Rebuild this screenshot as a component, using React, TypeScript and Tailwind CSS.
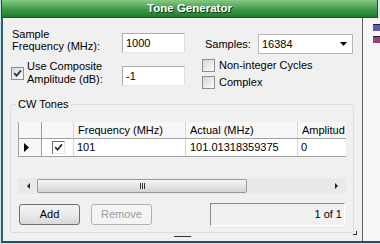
import React from 'react';

function Check({ checked, sunken }: { checked?: boolean; sunken?: boolean }) {
  return (
    <span
      className={`w-[13px] h-[13px] shrink-0 flex items-center justify-center ${
        sunken
          ? 'border border-t-[#6d6d6d] border-l-[#6d6d6d] border-r-[#e4e4e4] border-b-[#e4e4e4] bg-white'
          : 'border border-[#8f8f8f] bg-[linear-gradient(135deg,#d6d6d6,#fdfdfd)]'
      }`}
    >
      {checked && (
        <svg width="9" height="9" viewBox="0 0 9 9">
          <path d="M1.2 4.2 L3.6 6.8 L8 1.4" stroke="#1f2b47" strokeWidth="1.7" fill="none" />
        </svg>
      )}
    </span>
  );
}

function TextBox({ value }: { value: string }) {
  return (
    <div className="w-[63px] h-[20px] shrink-0 border border-[#abadb3] border-b-[#e3e9ef] border-r-[#dbdfe6] bg-white pl-[3px] flex items-center">
      {value}
    </div>
  );
}

export default function App() {
  return (
    <div className="w-[380px] h-[244px] overflow-hidden bg-[#cbe4ec] text-[11px] text-black font-['Liberation_Sans',Arial,sans-serif] flex flex-col">
      {/* title row */}
      <div className="flex h-[18px] shrink-0">
        <div className="w-[377px] ml-px border-b border-r border-l border-[#1f4f27] bg-[linear-gradient(#86c986,#3f9a48_55%,#1f7a2c)] flex items-center justify-center">
          <span className="text-white font-bold text-[11.5px] [text-shadow:1px_1px_0_#0e3b12]">Tone Generator</span>
        </div>
        <div className="flex-1 bg-[#e4e8ea]" />
      </div>

      <div className="flex h-[223px] shrink-0">
        {/* main panel */}
        <div className="relative w-[362px] ml-px border-l-2 border-[#36606c] border-r border-r-[#5f5f5f] bg-[#f0f0f0] flex flex-col">
          {/* top section */}
          <div className="flex h-[71px] shrink-0">
            <div className="w-[182px] flex flex-col">
              <div className="flex mt-[10px] ml-[9px]">
                <div className="w-[110px] leading-[12px]">
                  Sample
                  <br />
                  Frequency (MHz):
                </div>
                <div className="mt-[5px]">
                  <TextBox value="1000" />
                </div>
              </div>
              <div className="flex mt-[7px] ml-[8px]">
                <div className="mt-[7px]">
                  <Check checked />
                </div>
                <div className="w-[95px] ml-[3px] leading-[13px]">
                  Use Composite
                  <br />
                  Amplitude (dB):
                </div>
                <div className="mt-[6px]">
                  <TextBox value="-1" />
                </div>
              </div>
            </div>
            <div className="ml-[17px] flex flex-col">
              <div className="flex items-center mt-[16px]">
                <span className="w-[53px] ml-[3px]">Samples:</span>
                <div className="w-[95px] h-[20px] border border-[#b9b9b9] bg-white flex items-center justify-between pl-[3px] pr-[5px]">
                  <span>16384</span>
                  <svg width="7" height="4" viewBox="0 0 7 4">
                    <path d="M0 0 H7 L3.5 4 Z" fill="#000" />
                  </svg>
                </div>
              </div>
              <div className="flex items-center mt-[5px]">
                <Check />
                <span className="ml-[4px] leading-[13px]">Non-integer Cycles</span>
              </div>
              <div className="flex items-center mt-[4px]">
                <Check />
                <span className="ml-[4px] leading-[13px]">Complex</span>
              </div>
            </div>
          </div>

          {/* group box */}
          <div className="relative ml-[7px] mt-[15px] w-[344px] h-[129px] shrink-0 border border-[#d5dfe5] rounded-[3px] pl-[7px] pt-[17px]">
            <span className="absolute left-[5px] top-[-7px] px-[2px] leading-[13px] bg-[#f0f0f0]">CW Tones</span>

            {/* data grid */}
            <div className="w-[328px] h-[72px] flex flex-col">
              <div className="flex h-[17px] bg-[#f7f7f7] border-b border-[#a0a0a0]">
                <div className="w-[23px] border-l border-[#a0a0a0]" />
                <div className="w-[32px] border-l border-[#a0a0a0]" />
                <div className="w-[112px] border-l border-[#d5d5d5] pl-[4px] flex items-center">Frequency (MHz)</div>
                <div className="w-[112px] border-l border-[#d5d5d5] pl-[4px] flex items-center">Actual (MHz)</div>
                <div className="w-[49px] border-l border-[#d5d5d5] pl-[4px] flex items-center overflow-hidden whitespace-nowrap">Amplitud</div>
              </div>
              <div className="flex h-[18px] border-b border-[#a0a0a0]">
                <div className="w-[23px] border-l border-[#a0a0a0] bg-[#f7f7f7] flex items-center pl-[5px]">
                  <svg width="5" height="9" viewBox="0 0 5 9">
                    <path d="M0 0 L5 4.5 L0 9 Z" fill="#000" />
                  </svg>
                </div>
                <div className="w-[32px] border-l border-[#a0a0a0] bg-white flex items-center pl-[10px]">
                  <Check checked sunken />
                </div>
                <div className="w-[112px] border-l border-[#d5d5d5] bg-white pl-[3px] flex items-center">101</div>
                <div className="w-[112px] border-l border-[#d5d5d5] bg-white pl-[4px] flex items-center">101.01318359375</div>
                <div className="w-[49px] border-l border-[#d5d5d5] bg-white pl-[3px] flex items-center">0</div>
              </div>
              <div className="flex-1" />
              {/* horizontal scrollbar */}
              <div className="h-[16px] bg-[#e9e9e9] flex items-center">
                <div className="w-[19px] flex justify-center pl-[2px]">
                  <svg width="3" height="6" viewBox="0 0 3 6">
                    <path d="M3 0 L0 3 L3 6 Z" fill="#222" />
                  </svg>
                </div>
                <div className="w-[210px] h-[14px] rounded-[2px] border border-[#9b9b9b] bg-[linear-gradient(#f5f5f5,#e6e6e6_50%,#d3d3d3)] flex items-center justify-center gap-[1px]">
                  <span className="w-[1px] h-[6px] bg-[#333]" />
                  <span className="w-[1px] h-[6px] bg-[#333]" />
                  <span className="w-[1px] h-[6px] bg-[#333]" />
                </div>
                <div className="flex-1 flex justify-end pr-[8px]">
                  <svg width="3" height="6" viewBox="0 0 3 6">
                    <path d="M0 0 L3 3 L0 6 Z" fill="#222" />
                  </svg>
                </div>
              </div>
            </div>

            {/* buttons */}
            <div className="flex items-center mt-[9px]">
              <button className="ml-[1px] w-[61px] h-[21px] rounded-[3px] border border-[#707070] bg-[linear-gradient(#f3f3f3,#ebebeb_50%,#d8d8d8)] flex items-center justify-center">
                Add
              </button>
              <button className="ml-[11px] w-[61px] h-[21px] rounded-[3px] border border-[#adb2b5] bg-[#f4f4f4] text-[#9b9b9b] flex items-center justify-center">
                Remove
              </button>
              <div className="ml-[58px] w-[135px] h-[23px] border border-t-[#8a8a8a] border-l-[#8a8a8a] border-r-[#ffffff] border-b-[#ffffff] flex items-center justify-end pr-[2px]">
                1 of 1
              </div>
            </div>
            <span className="absolute right-[-4px] bottom-[-3px] w-[4px] h-[4px] border-r border-b border-[#333]" />
          </div>

          {/* splitter grip */}
          <span className="block mt-[3px] ml-[171px] w-[17px] h-px bg-[#333]" />
        </div>

        {/* right strip */}
        <div className="flex-1 bg-[#f6f6f6] flex flex-col items-end">
          <span className="mt-[6px] w-[7px] h-[7px] bg-[#5c5ca6] border-t border-[#222]" />
          <span className="mt-[5px] w-[7px] h-[7px] bg-[#9c3e80] border-t border-[#222]" />
        </div>
      </div>

      <div className="h-[2px] ml-px bg-[#2d4f5a]" />
    </div>
  );
}
